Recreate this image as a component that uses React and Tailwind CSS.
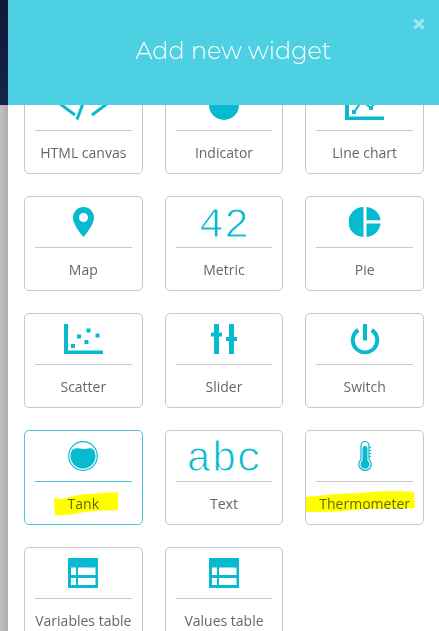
import React from "react";

function HtmlIcon() {
  return (
    <svg width="54" height="30" viewBox="0 0 54 30" fill="none" stroke="currentColor" strokeWidth="3">
      <path d="M19 4 5 14.500l14 10.500M36 4l14 10.500-14 10.500M32 0 21 29.500" />
    </svg>
  );
}

function IndicatorIcon() {
  return (
    <svg width="30" height="30" viewBox="0 0 30 30" fill="currentColor">
      <circle cx="15" cy="15" r="15" />
    </svg>
  );
}

function LineChartIcon() {
  return (
    <svg width="39" height="30" viewBox="0 0 39 30" fill="currentColor">
      <path d="M0 0h4v26.500h35V30H0z" />
      <path d="M9 22 17 11l9 7 9-13" fill="none" stroke="currentColor" strokeWidth="2" />
      <path d="M7 20h4v4H7zM15 9h4v4h-4zM24 16h4v4h-4zM33 3h4v4h-4z" />
    </svg>
  );
}

function MapIcon() {
  return (
    <svg width="21" height="30" viewBox="5 2 14 20" fill="currentColor">
      <path d="M12 2C8.130 2 5 5.130 5 9c0 5.250 7 13 7 13s7-7.750 7-13c0-3.870-3.130-7-7-7zm0 10a3 3 0 1 1 0-6 3 3 0 0 1 0 6z" />
    </svg>
  );
}

function PieIcon() {
  return (
    <svg width="32" height="30" viewBox="0 0 32 30" fill="currentColor">
      <path d="M14.500 0v30A15 15 0 0 1 14.500 0zM17.500 0A15 15 0 0 1 31.500 13.300h-14zM17.500 16.500h14A15 15 0 0 1 17.500 30z" />
    </svg>
  );
}

function ScatterIcon() {
  return (
    <svg width="39" height="30" viewBox="0 0 39 30" fill="currentColor">
      <path d="M0 0h4v26.500h35V30H0zM7 20h4v4H7zM13 10.500h4v4h-4zM22.500 4.500h4v4h-4zM31.500 9.500h4v4h-4zM20.500 16h4v4h-4z" />
    </svg>
  );
}

function SliderIcon() {
  return (
    <svg width="26" height="30" viewBox="0 0 26 30" fill="currentColor">
      <path d="M3 0h5v8.500h3v4H8V30H3V12.500H0v-4h3zM18 0h5v13h3v4h-3v13h-5V17h-3v-4h3z" />
    </svg>
  );
}

function SwitchIcon() {
  return (
    <svg width="30" height="30" viewBox="0 0 30 30" fill="none" stroke="currentColor" strokeWidth="4">
      <path d="M15 0v16.500M8.300 6A12.200 12.200 0 1 0 21.700 6" />
    </svg>
  );
}

function TankIcon() {
  return (
    <svg width="30" height="30" viewBox="0 0 30 30">
      <circle cx="15" cy="15" r="14.300" fill="none" stroke="currentColor" strokeWidth="1.200" />
      <path d="M3.800 9.500C5 7.600 7.500 7 10 7.200c3 .3 5 1 8 .5 3-.6 6.500-1 8.200 1.800A12.500 12.500 0 1 1 3.800 9.500z" fill="currentColor" />
    </svg>
  );
}

function ThermometerIcon() {
  return (
    <svg width="14" height="30" viewBox="0 0 14 30" fill="none" stroke="currentColor">
      <path d="M3 18.500V4.500a4 4 0 0 1 8 0v14a6.200 6.200 0 1 1-8 0z" strokeWidth="1.200" />
      <path d="M4.500 7.500a2.500 2.500 0 0 1 5 0v12a4.500 4.500 0 1 1-5 0z" fill="currentColor" stroke="none" />
      <path d="M11 6.500h2M11 9.500h2M11 12.500h2M11 15.500h2" />
    </svg>
  );
}

function TableIcon() {
  return (
    <svg width="30" height="30" viewBox="0 0 30 30" fill="currentColor" fillRule="evenodd">
      <path d="M0 0h30v30H0zM3 9.500V17h5V9.500zM10 9.500V17h17.500V9.500zM3 20v7h5v-7zM10 20v7h17.500v-7z" />
    </svg>
  );
}

function GlyphIcon({ children }) {
  return (
    <span className="pt-2 font-['Courier_New','Liberation_Mono',monospace] text-[42px] leading-[44px] [-webkit-text-stroke:1px_white]">
      {children}
    </span>
  );
}

function TankMarker() {
  return (
    <svg className="pointer-events-none absolute left-7 top-[61px] mix-blend-multiply" width="66" height="24" viewBox="0 0 66 24" fill="#ffff00">
      <path d="M1 6c5 1 9 1 13 0 8-3 16-4 22-4L65 0v18c-12 1-23 0-34 2-8 2-18 4-29 3z" />
    </svg>
  );
}

function ThermometerMarker() {
  return (
    <svg className="pointer-events-none absolute left-0 top-[59px] mix-blend-multiply" width="110" height="24" viewBox="0 0 110 24" fill="#ffff00">
      <path d="M0 7 30 4 55 3C72 1 90 0 108 2l1 16c-24 1-44 0-62 2-16 2-31 2-47 2z" />
    </svg>
  );
}

const widgets = [
  { name: "HTML canvas", icon: <HtmlIcon /> },
  { name: "Indicator", icon: <IndicatorIcon /> },
  { name: "Line chart", icon: <LineChartIcon /> },
  { name: "Map", icon: <MapIcon /> },
  { name: "Metric", icon: <GlyphIcon>42</GlyphIcon> },
  { name: "Pie", icon: <PieIcon /> },
  { name: "Scatter", icon: <ScatterIcon /> },
  { name: "Slider", icon: <SliderIcon /> },
  { name: "Switch", icon: <SwitchIcon /> },
  { name: "Tank", icon: <TankIcon />, active: true, marker: <TankMarker /> },
  { name: "Text", icon: <GlyphIcon>abc</GlyphIcon> },
  { name: "Thermometer", icon: <ThermometerIcon />, marker: <ThermometerMarker /> },
  { name: "Variables table", icon: <TableIcon /> },
  { name: "Values table", icon: <TableIcon /> },
];

function WidgetCard({ name, icon, active, marker }) {
  const border = active ? "border-[#4fc3d0]" : "border-[#c8c8c8]";
  return (
    <button type="button" className={`relative flex flex-col rounded-[5px] border bg-white px-2.5 ${border}`}>
      <span className={`flex h-[51px] w-full items-center justify-center border-b text-[#08bad0] ${border}`}>{icon}</span>
      <span className="-mx-2.5 self-stretch whitespace-nowrap pt-0.5 text-center text-sm leading-10 text-[#666]">
        {name}
      </span>
      {marker}
    </button>
  );
}

export default function App() {
  return (
    <div className="flex h-screen overflow-hidden bg-white font-['Open_Sans',sans-serif]">
      <div className="flex w-2 shrink-0 flex-col">
        <div className="h-[105px] bg-linear-to-b from-[#0f1838] to-[#14244a]" />
        <div className="flex-1 bg-linear-to-r from-[#c2c2c2] to-[#adadad]" />
      </div>
      <div className="flex min-w-0 flex-1 flex-col">
        <header className="relative flex h-[105px] shrink-0 items-center justify-center bg-[#4dd0e1] pb-1 pl-5">
          <h1 className="font-['Montserrat','Inter',sans-serif] text-2xl font-light text-white">Add new widget</h1>
          <button type="button" aria-label="Close" className="absolute right-3.5 top-[18px] text-[#a9e8f0]">
            <svg width="12" height="12" viewBox="0 0 12 12" fill="none" stroke="currentColor" strokeWidth="3">
              <path d="M1.500 1.500l9 9M10.500 1.500l-9 9" />
            </svg>
          </button>
        </header>
        <main className="min-h-0 flex-1 overflow-hidden pl-4 pr-[15px]">
          <div className="-mt-[26px] grid grid-cols-3 gap-[22px]">
            {widgets.map((widget) => (
              <WidgetCard key={widget.name} {...widget} />
            ))}
          </div>
        </main>
      </div>
    </div>
  );
}
